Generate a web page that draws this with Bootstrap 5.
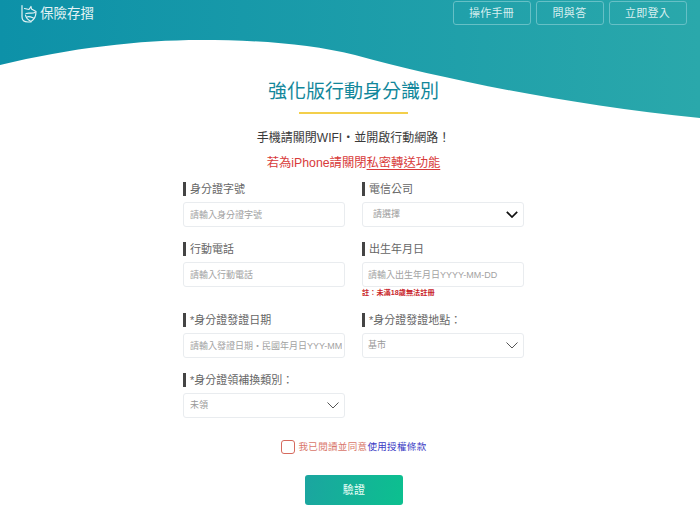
<!DOCTYPE html>
<html lang="zh-Hant">
<head>
<meta charset="utf-8">
<title>強化版行動身分識別</title>
<link href="https://cdn.jsdelivr.net/npm/bootstrap@5.3.0/dist/css/bootstrap.min.css" rel="stylesheet">
<style>
html,body{height:514px;overflow:hidden;background:#fff}
body{font-family:"Liberation Sans","Noto Sans CJK TC",sans-serif;color:#333;position:relative}
.wave{position:absolute;left:0;top:0;width:700px;height:125px;z-index:0}
.page-wrap{position:relative;z-index:1;width:700px}
.top-bar{height:40px;padding:1px 13.5px 0 21px}
.top-nav{gap:5px}
.brand-mark{color:#e4f3f5;font-size:13.5px;line-height:1;letter-spacing:0;padding-top:3px}
.brand-mark svg{width:16px;height:20px;margin-right:3px}
.brand-mark span{margin-left:0}
.top-btn{height:24px;line-height:21px;padding:0;font-size:11px;color:#d8eff0;border:1px solid #66c0c6;border-radius:3px;background:transparent;letter-spacing:.3px}
.top-btn.w1{width:78px}.top-btn.w2{width:68px}.top-btn.w3{width:78px}
.main-title{margin:40px 0 0;padding-left:7px;font-size:19px;line-height:24px;font-weight:400;color:#12879b;text-align:center}
.title-rule{width:109px;height:2px;background:#f3cf4b;margin:8px 0 0 299px}
.msg-a{margin:15px 0 0;padding-left:7px;font-size:12px;line-height:19px;text-align:center;color:#3a3a3a}
.msg-b{margin:6px 0 0;padding-left:7px;font-size:12.3px;line-height:19px;text-align:center;color:#d83a3a}
.msg-b u{text-underline-offset:2px}
.form-area{width:341px;margin:9px 0 0 183px;display:grid;grid-template-columns:162px 162px;column-gap:17px}
.fld{height:60px}
.fld.tall{height:71px}
.fld-lab{display:block;border-left:3px solid #444;height:14px;line-height:14px;font-size:11px;color:#666;padding-left:4px;margin:0 0 6px;white-space:nowrap}
.fld-box{height:25px;border:1px solid #e9ecef;border-radius:3px;font-size:9px;line-height:23px;color:#999;padding:0 2px 0 6px;background:#fff;box-shadow:none}
.fld-box.nudge{padding-left:5px}
.fld-box::placeholder{color:#a2a2a2;opacity:1}
.fld-box:focus{box-shadow:none;border-color:#e9ecef}
.pick{background-image:none;display:flex;align-items:center;justify-content:space-between;padding-right:5px;padding-left:5px}
.col-left.pick{padding-left:6px}
.pick.ind{padding-left:10px}
.pick svg{width:12px;height:7px;flex:none}
.note{font-size:7.2px;line-height:9px;color:#c9262c;margin-top:1px;font-weight:700}
.agree{margin-top:7px;padding-left:8px;display:flex;justify-content:center;align-items:center;font-size:9.5px;letter-spacing:.35px;color:#d9776b;gap:3px}
.tick{width:14px;height:14px;border:1.3px solid #d66a5e;border-radius:3px;display:block;margin:0;appearance:none;background:#fff}
.agree a{color:#3b3bc4;text-decoration:none}
.go-btn{display:block;width:98px;height:30px;margin:21px 0 0 305px;padding:0;border:0;border-radius:3px;background:linear-gradient(100deg,#1ba5a0,#0cc08f);color:#e9fff7;font-size:11px;letter-spacing:.3px}
</style>
</head>
<body>
<svg class="wave" viewBox="0 0 700 125" preserveAspectRatio="none" aria-hidden="true">
<defs><linearGradient id="g" x1="0" x2="1" y1="0" y2="0"><stop offset="0" stop-color="#0d91a8"/><stop offset="1" stop-color="#2aa8ab"/></linearGradient></defs>
<path d="M0 65C70 48 140 40 200 40C260 40 310 44 355 55C440 78 560 104 700 118V0H0Z" fill="url(#g)"/>
</svg>
<div class="page-wrap">
<header class="top-bar d-flex justify-content-between align-items-start">
<div class="brand-mark d-flex align-items-center">
<svg viewBox="0 0 16 20" fill="none" stroke="#e4f3f5" stroke-width="1.2" stroke-linejoin="round" stroke-linecap="round"><path d="M1 1.5V13C1 16.5 4 18 7 18H10"/><path d="M3.5 4.5L8 5.5L10 2.5L10.5 5L15 7.5C15 12 13.5 15.5 10 17.5C7 16 5 14 4.5 11"/><path d="M5 9.5C8 8.5 11 10 14 8.5"/><path d="M6 13C8 12 10 13 12.5 14"/></svg>
<span>保險存摺</span>
</div>
<nav class="d-flex top-nav">
<button type="button" class="btn top-btn w1">操作手冊</button>
<button type="button" class="btn top-btn w2">問與答</button>
<button type="button" class="btn top-btn w3">立即登入</button>
</nav>
</header>
<h1 class="main-title">強化版行動身分識別</h1>
<div class="title-rule"></div>
<p class="msg-a">手機請關閉WIFI・並開啟行動網路！</p>
<p class="msg-b">若為iPhone請關閉<u>私密轉送功能</u></p>
<form class="form-area">
<div class="fld"><label class="fld-lab">身分證字號</label><input class="form-control fld-box" placeholder="請輸入身分證字號"></div>
<div class="fld"><span class="fld-lab">電信公司</span><div class="fld-box pick ind"><span>請選擇</span><svg viewBox="0 0 12 7" fill="none" stroke="#111" stroke-width="1.7"><path d="M.8.8L6 6L11.2.8"/></svg></div></div>
<div class="fld tall"><label class="fld-lab">行動電話</label><input class="form-control fld-box" placeholder="請輸入行動電話"></div>
<div class="fld tall"><label class="fld-lab">出生年月日</label><input class="form-control fld-box nudge" placeholder="請輸入出生年月日YYYY-MM-DD"><div class="note">註：未滿18歲無法註冊</div></div>
<div class="fld"><label class="fld-lab">*身分證發證日期</label><input class="form-control fld-box" placeholder="請輸入發證日期・民國年月日YYY-MM"></div>
<div class="fld"><span class="fld-lab">*身分證發證地點：</span><div class="fld-box pick"><span>基市</span><svg viewBox="0 0 12 7" fill="none" stroke="#555" stroke-width="1"><path d="M.5.5L6 6L11.5.5"/></svg></div></div>
<div class="fld"><span class="fld-lab">*身分證領補換類別：</span><div class="fld-box pick col-left"><span>未領</span><svg viewBox="0 0 12 7" fill="none" stroke="#555" stroke-width="1"><path d="M.5.5L6 6L11.5.5"/></svg></div></div>
</form>
<div class="agree"><input type="checkbox" class="tick" aria-label="同意"><span>我已閱讀並同意<a href="#">使用授權條款</a></span></div>
<button type="button" class="btn go-btn">驗證</button>
</div>
<script src="https://cdn.jsdelivr.net/npm/bootstrap@5.3.0/dist/js/bootstrap.bundle.min.js"></script>
</body>
</html>
